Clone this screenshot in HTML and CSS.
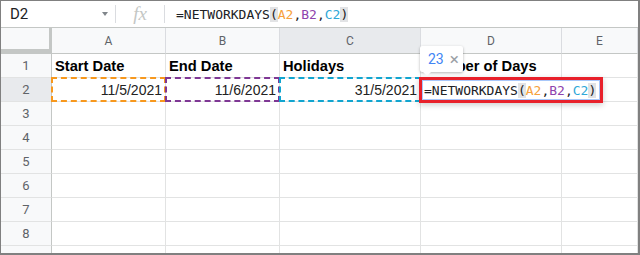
FILE: index.html
```html
<!DOCTYPE html>
<html lang="en">
<head>
    <meta charset="UTF-8">
    <title>NETWORKDAYS</title>
    <link rel="stylesheet" href="styles.css">
</head>
<body>
    <div class="frame">
        <div class="formula-bar">
            <div class="name-box">D2<span class="caret"></span></div>
            <div class="sep"></div>
            <div class="fx">fx</div>
            <div class="sep"></div>
            <div class="formula">=NETWORKDAYS<span class="paren">(</span><span class="ref-a">A2</span>,<span class="ref-b">B2</span>,<span class="ref-c">C2</span><span class="paren">)</span></div>
        </div>
        <div class="sheet">
            <div class="corner"></div>
            <div class="col-head">A</div>
            <div class="col-head">B</div>
            <div class="col-head active">C</div>
            <div class="col-head">D</div>
            <div class="col-head">E</div>

            <div class="row-head">1</div>
            <div class="cell bold">Start Date</div>
            <div class="cell bold">End Date</div>
            <div class="cell bold">Holidays</div>
            <div class="cell bold">Number of Days</div>
            <div class="cell"></div>

            <div class="row-head active">2</div>
            <div class="cell num range-a">11/5/2021</div>
            <div class="cell num range-b">11/6/2021</div>
            <div class="cell num range-c">31/5/2021</div>
            <div class="cell"></div>
            <div class="cell"></div>

            <div class="row-head">3</div><div class="cell"></div><div class="cell"></div><div class="cell"></div><div class="cell"></div><div class="cell"></div>
            <div class="row-head">4</div><div class="cell"></div><div class="cell"></div><div class="cell"></div><div class="cell"></div><div class="cell"></div>
            <div class="row-head">5</div><div class="cell"></div><div class="cell"></div><div class="cell"></div><div class="cell"></div><div class="cell"></div>
            <div class="row-head">6</div><div class="cell"></div><div class="cell"></div><div class="cell"></div><div class="cell"></div><div class="cell"></div>
            <div class="row-head">7</div><div class="cell"></div><div class="cell"></div><div class="cell"></div><div class="cell"></div><div class="cell"></div>
            <div class="row-head">8</div><div class="cell"></div><div class="cell"></div><div class="cell"></div><div class="cell"></div><div class="cell"></div>
            <div class="row-head">9</div><div class="cell"></div><div class="cell"></div><div class="cell"></div><div class="cell"></div><div class="cell"></div>
        </div>

        <div class="tip"><span class="tip-value">23</span><span class="tip-close">&times;</span></div>
        <div class="editor">=NETWORKDAYS<span class="paren">(</span><span class="ref-a">A2</span>,<span class="ref-b">B2</span>,<span class="ref-c">C2</span><span class="paren">)</span></div>
    </div>
</body>
</html>
```

FILE: styles.css
```css
body {
    margin: 0;
    background: #fff;
    font-family: Roboto, "Liberation Sans", Arial, sans-serif;
}
.frame {
    position: relative;
    width: 640px;
    height: 255px;
    box-sizing: border-box;
    border: solid #808080;
    border-width: 1px 2px 2px 1px;
    overflow: hidden;
}
.formula-bar {
    display: flex;
    align-items: center;
    height: 26px;
    border-bottom: 1px solid #c4c7c5;
}
.name-box {
    display: flex;
    align-items: center;
    width: 114px;
    box-sizing: border-box;
    padding-left: 9px;
    font-size: 15px;
    color: #202124;
}
.caret {
    margin-left: auto;
    margin-right: 7px;
    width: 0;
    height: 0;
    border-left: 3px solid transparent;
    border-right: 3px solid transparent;
    border-top: 4px solid #80868b;
}
.sep {
    width: 1px;
    height: 18px;
    background: #dadce0;
}
.fx {
    width: 48px;
    text-align: center;
    font-family: "Liberation Serif", serif;
    font-style: italic;
    font-size: 19px;
    color: #c4c7c5;
}
.formula {
    padding-left: 11px;
    font-family: "DejaVu Sans Mono", monospace;
    font-size: 13px;
    color: #202124;
}
.paren {
    background: #e2e3e5;
}
.ref-a { color: #f6a13c; }
.ref-b { color: #8e44ad; }
.ref-c { color: #2fa8d8; }

.sheet {
    display: grid;
    grid-template-columns: 51px 114px 114px 141px 141px 1fr;
    grid-template-rows: 26px repeat(9, 24px);
}
.corner {
    background: #f8f9fa;
    border-right: 4px solid #c4c7c5;
    border-bottom: 5px solid #c4c7c5;
    margin-right: -1px;
}
.col-head {
    display: flex;
    align-items: center;
    justify-content: center;
    background: #f8f9fa;
    border-right: 1px solid #dadce0;
    border-bottom: 1px solid #c4c7c5;
    font-size: 12px;
    color: #5f6368;
}
.col-head:first-of-type {
    border-left: none;
}
.row-head {
    display: flex;
    align-items: center;
    justify-content: center;
    background: #f8f9fa;
    border-right: 1px solid #c4c7c5;
    border-bottom: 1px solid #e2e3e3;
    font-size: 13px;
    color: #5f6368;
}
.active {
    background: #e8eaed;
}
.cell {
    position: relative;
    display: flex;
    align-items: center;
    padding: 0 3px;
    border-right: 1px solid #e2e3e3;
    border-bottom: 1px solid #e2e3e3;
    font-family: "Liberation Sans", Arial, sans-serif;
    font-size: 14px;
    color: #222;
    white-space: nowrap;
    overflow: visible;
}
.bold {
    font-weight: bold;
    font-size: 14.7px;
    color: #000;
}
.num {
    justify-content: flex-end;
}
.range-a::after,
.range-b::after,
.range-c::after {
    content: "";
    position: absolute;
    top: -1px;
    left: -1px;
    right: -1px;
    bottom: -1px;
    border: 2px dashed;
}
.range-a::after { border-color: #f7981d; }
.range-b::after { border-color: #7e3794; }
.range-c::after { border-color: #11a5d0; }

.tip {
    position: absolute;
    left: 419px;
    top: 45px;
    width: 43px;
    height: 26px;
    display: flex;
    align-items: center;
    gap: 6px;
    padding-left: 8px;
    box-sizing: border-box;
    background: #fff;
    border-radius: 2px;
    box-shadow: 0 1px 3px rgba(0, 0, 0, 0.3);
    font-size: 14px;
}
.tip::after {
    content: "";
    position: absolute;
    left: 3px;
    bottom: -4px;
    border-left: 4px solid transparent;
    border-right: 4px solid transparent;
    border-top: 4px solid #fff;
}
.tip-value {
    color: #4285f4;
}
.tip-close {
    color: #9aa0a6;
    font-size: 17px;
}
.editor {
    position: absolute;
    left: 418px;
    top: 76px;
    width: 184px;
    height: 26px;
    box-sizing: border-box;
    display: flex;
    align-items: center;
    padding-left: 2px;
    background: #fff;
    border: 3px solid #e8202a;
    box-shadow: inset 0 0 0 1px #a8c7fa, 0 2px 6px rgba(0, 0, 0, 0.2);
    font-family: "DejaVu Sans Mono", monospace;
    font-size: 13px;
    color: #202124;
}
```
